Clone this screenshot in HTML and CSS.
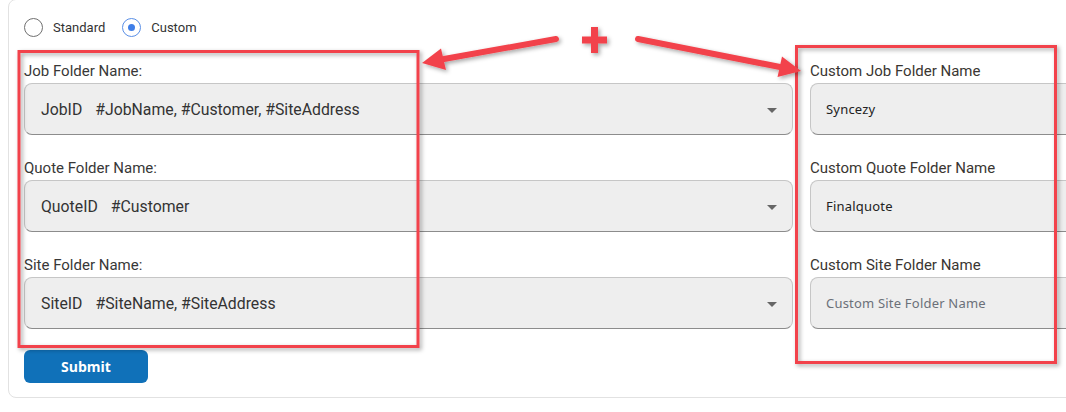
FILE: index.html
```html
<!DOCTYPE html>
<html lang="en">
<head>
  <meta charset="UTF-8">
  <meta name="viewport" content="width=device-width, initial-scale=1.0">
  <title>Folder Naming</title>
  <link rel="stylesheet" href="styles.css">
</head>
<body>
  <div class="card">
    <div class="mode">
      <label class="radio"><span class="dot"></span>Standard</label>
      <label class="radio checked"><span class="dot"></span>Custom</label>
    </div>

    <div class="fields">
      <div class="column">
        <div class="field">
          <label>Job Folder Name:</label>
          <div class="select"><span class="id">JobID</span>#JobName, #Customer, #SiteAddress<span class="caret"></span></div>
        </div>
        <div class="field">
          <label>Quote Folder Name:</label>
          <div class="select"><span class="id">QuoteID</span>#Customer<span class="caret"></span></div>
        </div>
        <div class="field">
          <label>Site Folder Name:</label>
          <div class="select"><span class="id">SiteID</span>#SiteName, #SiteAddress<span class="caret"></span></div>
        </div>
      </div>

      <div class="column custom">
        <div class="field">
          <label>Custom Job Folder Name</label>
          <input type="text" value="Syncezy">
        </div>
        <div class="field">
          <label>Custom Quote Folder Name</label>
          <input type="text" value="Finalquote">
        </div>
        <div class="field">
          <label>Custom Site Folder Name</label>
          <input type="text" placeholder="Custom Site Folder Name">
        </div>
      </div>
    </div>

    <button class="submit">Submit</button>
  </div>

  <!-- annotation drawn over the screenshot -->
  <svg class="notes" width="1066" height="412" viewBox="0 0 1066 412">
    <defs>
      <filter id="shadow" x="-10%" y="-10%" width="130%" height="130%">
        <feDropShadow dx="2" dy="2" stdDeviation="2" flood-color="#000" flood-opacity="0.35"/>
      </filter>
    </defs>
    <g filter="url(#shadow)" fill="none" stroke="#f2434b" stroke-width="3">
      <rect x="19" y="51.5" width="399" height="295"/>
      <rect x="796.5" y="46.5" width="259" height="316"/>
    </g>
    <g filter="url(#shadow)" fill="#f2434b" stroke="#f2434b" stroke-linecap="round">
      <line x1="556" y1="39" x2="444" y2="59" stroke-width="6"/>
      <polygon points="422,63 441,48.5 446,70" stroke="none"/>
      <line x1="638" y1="39" x2="780" y2="67" stroke-width="6"/>
      <polygon points="801,71 782,56.5 777.5,77" stroke="none"/>
      <rect x="582" y="36.5" width="25" height="7" stroke="none"/>
      <rect x="591" y="27" width="7" height="26" stroke="none"/>
    </g>
  </svg>
</body>
</html>
```

FILE: styles.css
```css
body {
  margin: 0;
  background: #fff;
  font-family: Roboto, "Liberation Sans", sans-serif;
  color: #333;
  overflow: hidden;
  width: 1066px;
  height: 412px;
  position: relative;
}
.card {
  margin: -1px 0 0 8px;
  width: 1100px;
  padding: 18px 0 14px 15px;
  border: 1px solid #e2e2e2;
  border-radius: 8px;
  background: #fff;
}
.mode {
  display: flex;
  align-items: center;
  height: 19px;
  gap: 17px;
}
.radio {
  display: flex;
  align-items: center;
  gap: 10px;
  font-size: 13px;
  color: #333;
}
.radio .dot {
  width: 19px;
  height: 19px;
  box-sizing: border-box;
  border: 1.5px solid #707070;
  border-radius: 50%;
  display: flex;
  align-items: center;
  justify-content: center;
}
.radio.checked .dot {
  border-color: #5a8fe6;
}
.radio.checked .dot::after {
  content: "";
  width: 7px;
  height: 7px;
  border-radius: 50%;
  background: #3f7ee8;
}
.fields {
  display: flex;
  gap: 17px;
  margin-top: 25px;
}
.column {
  width: 769px;
  display: flex;
  flex-direction: column;
  gap: 24px;
}
.column.custom {
  width: 300px;
}
.field label {
  display: block;
  font-size: 15px;
  line-height: 18px;
  margin-bottom: 3px;
  color: #383838;
}
.column.custom label {
  color: #3a3632;
}
.select {
  position: relative;
  height: 52px;
  box-sizing: border-box;
  display: flex;
  align-items: center;
  padding-left: 16px;
  background: #eeeeee;
  border: 1px solid #c6c6c6;
  border-bottom-color: #8c8c8c;
  border-radius: 8px;
  font-size: 15.8px;
  color: #333;
}
.select .id {
  margin-right: 13px;
}
.select .caret {
  position: absolute;
  right: 15px;
  top: 24px;
  border-left: 5px solid transparent;
  border-right: 5px solid transparent;
  border-top: 5px solid #666;
}
.field input {
  display: block;
  width: 100%;
  height: 52px;
  box-sizing: border-box;
  padding: 0 15px;
  background: #eeeeee;
  border: 1px solid #c6c6c6;
  border-bottom-color: #8c8c8c;
  border-radius: 8px;
  font-family: "Noto Sans", "Open Sans", sans-serif;
  font-size: 13px;
  color: #222;
  letter-spacing: 0.2px;
}
.field input::placeholder {
  color: #6b7079;
}
.submit {
  margin-top: 21px;
  width: 124px;
  height: 33px;
  border: none;
  border-radius: 6px;
  background: #1071b9;
  color: #fff;
  font-family: "Open Sans", sans-serif;
  font-weight: 700;
  font-size: 14px;
}
.notes {
  position: absolute;
  left: 0;
  top: 0;
  pointer-events: none;
}
```
